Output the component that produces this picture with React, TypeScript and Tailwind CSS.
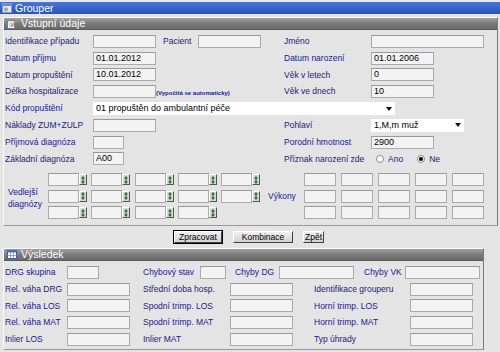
import React from 'react';

const Label = ({ children, className = '' }: { children: React.ReactNode; className?: string }) => (
  <span className={`shrink-0 whitespace-nowrap text-[#20208c] ${className}`}>{children}</span>
);

const Field = ({ value = '', className = '' }: { value?: string; className?: string }) => (
  <div
    className={`h-[13px] shrink-0 border border-[#ababab] border-t-[#9a9a9a] bg-[#f3f3f3] pl-[2px] text-[9px] leading-[11px] text-black ${className}`}
  >
    {value}
  </div>
);

const Select = ({ value, className = '' }: { value: string; className?: string }) => (
  <div className={`flex h-[13px] shrink-0 items-center justify-between bg-white pl-[3px] pr-[3px] text-[9px] text-black ${className}`}>
    <span>{value}</span>
    <svg width="6" height="4" viewBox="0 0 6 4">
      <path d="M0 0h6L3 4z" fill="#111" />
    </svg>
  </div>
);

const Spinner = () => (
  <div className="flex h-[11px] w-[8px] shrink-0 items-center justify-center border border-t-white border-l-white border-r-[#555] border-b-[#555] bg-[#d8d8d8]">
    <svg width="4" height="8" viewBox="0 0 4 8">
      <path d="M2 0L4 2.5H0z M2 8L0 5.5h4z" fill="#0a7a14" />
      <rect x="1.4" y="2" width="1.2" height="4" fill="#0a7a14" />
    </svg>
  </div>
);

const DiagCell = () => (
  <div className="flex w-[40px] items-center">
    <Field className="w-[31px]" />
    <Spinner />
  </div>
);

const SectionHeader = ({ icon, title }: { icon: React.ReactNode; title: string }) => (
  <div className="flex h-[12px] items-center gap-[4px] border-b border-[#5a5a5a] bg-gradient-to-b from-[#a2a2a2] via-[#7c7c7c] to-[#6a6a6a] pl-[3px] text-[10.5px] text-white">
    {icon}
    <span className="leading-none">{title}</span>
  </div>
);

const EditIcon = () => (
  <svg width="10" height="10" viewBox="0 0 10 10">
    <rect x="0.5" y="1.5" width="7" height="8" fill="#f4f4f4" stroke="#6a7fb0" />
    <path d="M2 4h4M2 6h3" stroke="#9aa" strokeWidth="0.8" />
    <path d="M4 7L9 1.5l0.8 0.8L4.6 8z" fill="#f0b020" stroke="#b07010" strokeWidth="0.5" />
  </svg>
);

const TableIcon = () => (
  <svg width="10" height="9" viewBox="0 0 10 9">
    <rect x="0.5" y="0.5" width="9" height="8" fill="#fff" stroke="#3c5ea8" />
    <rect x="0.5" y="0.5" width="9" height="2" fill="#4a70c0" />
    <path d="M3.5 2.5v6M6.5 2.5v6M0.5 5.5h9" stroke="#7890c8" strokeWidth="0.8" />
  </svg>
);

const WindowIcon = () => (
  <svg width="10" height="10" viewBox="0 0 10 10">
    <rect x="0.5" y="0.5" width="9" height="9" fill="#dfe6f2" stroke="#8a98b8" />
    <rect x="1" y="1" width="8" height="2" fill="#6f86c0" />
    <circle cx="4" cy="6.5" r="2" fill="#9aa4b6" />
  </svg>
);

const Radio = ({ checked }: { checked?: boolean }) => (
  <div className="flex h-[8px] w-[8px] items-center justify-center rounded-full border border-[#8a8a8a] bg-white">
    {checked && <div className="h-[4px] w-[4px] rounded-full bg-black" />}
  </div>
);

const Row = ({ children }: { children: React.ReactNode }) => (
  <div className="flex h-[16.8px] items-center">{children}</div>
);

const Button = ({ children, className = '' }: { children: React.ReactNode; className?: string }) => (
  <div className={`flex h-[12px] items-center justify-center border border-t-white border-l-white border-r-[#404040] border-b-[#404040] bg-gradient-to-b from-[#f0f0f0] to-[#d2d2d2] leading-none text-black ${className}`}>
    {children}
  </div>
);

export default function App() {
  return (
    <div className="h-[352px] w-[500px] overflow-hidden bg-[#e4e4e4] font-['Liberation_Sans',Arial,sans-serif] text-[8.5px]">
      {/* Title bar */}
      <div className="border-t-2 border-[#ece9d8] bg-[#ece9d8]">
        <div className="flex h-[12px] items-center gap-[3px] bg-gradient-to-b from-[#4676da] to-[#2853bd] pl-[2px] text-[10.5px] text-white">
          <WindowIcon />
          <span className="leading-none">Grouper</span>
        </div>
      </div>

      <div className="pl-[3px] pt-[3px]">
        {/* Vstupní údaje */}
        <div className="h-[209px] w-[495px] border border-[#fafafa] border-r-[#7a7a7a] border-b-[#9a9a9a]">
          <SectionHeader icon={<EditIcon />} title="Vstupní údaje" />
          <div className="pl-[1px] pt-[3px]">
            <Row>
              <Label className="w-[88px]">Identifikace případu</Label>
              <Field className="w-[63px]" />
              <Label className="ml-[7px] w-[35px]">Pacient</Label>
              <Field className="w-[63px]" />
              <Label className="ml-[23px] w-[87px]">Jméno</Label>
              <Field className="w-[113px]" />
            </Row>
            <Row>
              <div className="flex w-[279px] items-center">
                <Label className="w-[88px]">Datum příjmu</Label>
                <Field className="w-[63px]" value="01.01.2012" />
              </div>
              <Label className="w-[87px]">Datum narození</Label>
              <Field className="w-[63px]" value="01.01.2006" />
            </Row>
            <Row>
              <div className="flex w-[279px] items-center">
                <Label className="w-[88px]">Datum propuštění</Label>
                <Field className="w-[63px]" value="10.01.2012" />
              </div>
              <Label className="w-[87px]">Věk v letech</Label>
              <Field className="w-[63px]" value="0" />
            </Row>
            <Row>
              <div className="flex w-[279px] items-center">
                <Label className="w-[88px]">Délka hospitalizace</Label>
                <Field className="w-[63px]" />
                <span className="mt-[4px] whitespace-nowrap text-[6px] font-bold text-[#20208c]">
                  (Vypočítá se automaticky)
                </span>
              </div>
              <Label className="w-[87px]">Věk ve dnech</Label>
              <Field className="w-[63px]" value="10" />
            </Row>
            <Row>
              <Label className="w-[88px]">Kód propuštění</Label>
              <Select className="w-[302px]" value="01 propuštěn do ambulantní péče" />
            </Row>
            <Row>
              <div className="flex w-[279px] items-center">
                <Label className="w-[88px]">Náklady ZUM+ZULP</Label>
                <Field className="w-[63px]" />
              </div>
              <Label className="w-[87px]">Pohlaví</Label>
              <Select className="w-[93px]" value="1,M,m muž" />
            </Row>
            <Row>
              <div className="flex w-[279px] items-center">
                <Label className="w-[88px]">Příjmová diagnóza</Label>
                <Field className="w-[31px]" />
              </div>
              <Label className="w-[87px]">Porodní hmotnost</Label>
              <Field className="w-[63px]" value="2900" />
            </Row>
            <Row>
              <div className="flex w-[279px] items-center">
                <Label className="w-[88px]">Základní diagnóza</Label>
                <Field className="w-[31px]" value="A00" />
              </div>
              <Label className="w-[92px]">Příznak narození zde</Label>
              <div className="flex items-center gap-[4px]">
                <Radio />
                <Label>Ano</Label>
                <div className="w-[6px]" />
                <Radio checked />
                <Label>Ne</Label>
              </div>
            </Row>

            {/* Vedlejší diagnózy / Výkony */}
            <div className="mt-[6px] flex">
              <div className="flex w-[43px] items-center pl-[3px] pt-[4px]">
                <Label className="leading-[12px]">
                  Vedlejší
                  <br />
                  diagnózy
                </Label>
              </div>
              <div className="flex w-[214px] flex-col gap-[3.5px]">
                <div className="flex gap-[3.3px]">
                  <DiagCell /><DiagCell /><DiagCell /><DiagCell /><DiagCell />
                </div>
                <div className="flex gap-[3.3px]">
                  <DiagCell /><DiagCell /><DiagCell /><DiagCell /><DiagCell />
                </div>
                <div className="flex gap-[3.3px]">
                  <DiagCell /><DiagCell /><DiagCell /><DiagCell />
                </div>
              </div>
              <div className="flex w-[42px] items-center pl-[6px]">
                <Label>Výkony</Label>
              </div>
              <div className="flex flex-col gap-[3.5px]">
                {[0, 1, 2].map((r) => (
                  <div key={r} className="flex gap-[5px]">
                    <Field className="w-[32px]" />
                    <Field className="w-[32px]" />
                    <Field className="w-[32px]" />
                    <Field className="w-[32px]" />
                    <Field className="w-[32px]" />
                  </div>
                ))}
              </div>
            </div>
          </div>
        </div>

        {/* Buttons */}
        <div className="flex h-[22px] items-center gap-[10px] pl-[170px]">
          <div className="border border-black">
            <Button className="w-[48px]">Zpracovat</Button>
          </div>
          <Button className="w-[60px]">Kombinace</Button>
          <Button className="w-[21px]">Zpět</Button>
        </div>

        {/* Výsledek */}
        <div className="h-[102px] w-[481px] border border-[#fafafa] border-r-[#7a7a7a] border-b-[#9a9a9a]">
          <SectionHeader icon={<TableIcon />} title="Výsledek" />
          <div className="pl-[1px] pt-[3px]">
            <Row>
              <Label className="w-[62px]">DRG skupina</Label>
              <Field className="w-[32px]" />
              <Label className="ml-[44px] w-[57px]">Chybový stav</Label>
              <Field className="w-[26px]" />
              <Label className="ml-[9px] w-[44px]">Chyby DG</Label>
              <Field className="w-[75px]" />
              <Label className="ml-[10px] w-[41px]">Chyby VK</Label>
              <Field className="w-[75px]" />
            </Row>
            {[
              ['Rel. váha DRG', 'Střední doba hosp.', 'Identifikace grouperu'],
              ['Rel. váha LOS', 'Spodní trimp. LOS', 'Horní trimp. LOS'],
              ['Rel. váha MAT', 'Spodní trimp. MAT', 'Horní trimp. MAT'],
              ['Inlier LOS', 'Inlier MAT', 'Typ úhrady'],
            ].map(([a, b, c]) => (
              <Row key={a}>
                <Label className="w-[62px]">{a}</Label>
                <Field className="w-[63px]" />
                <Label className="ml-[13px] w-[87px]">{b}</Label>
                <Field className="w-[63px]" />
                <Label className="ml-[21px] w-[96px]">{c}</Label>
                <Field className="w-[63px]" />
              </Row>
            ))}
          </div>
        </div>
      </div>
    </div>
  );
}
